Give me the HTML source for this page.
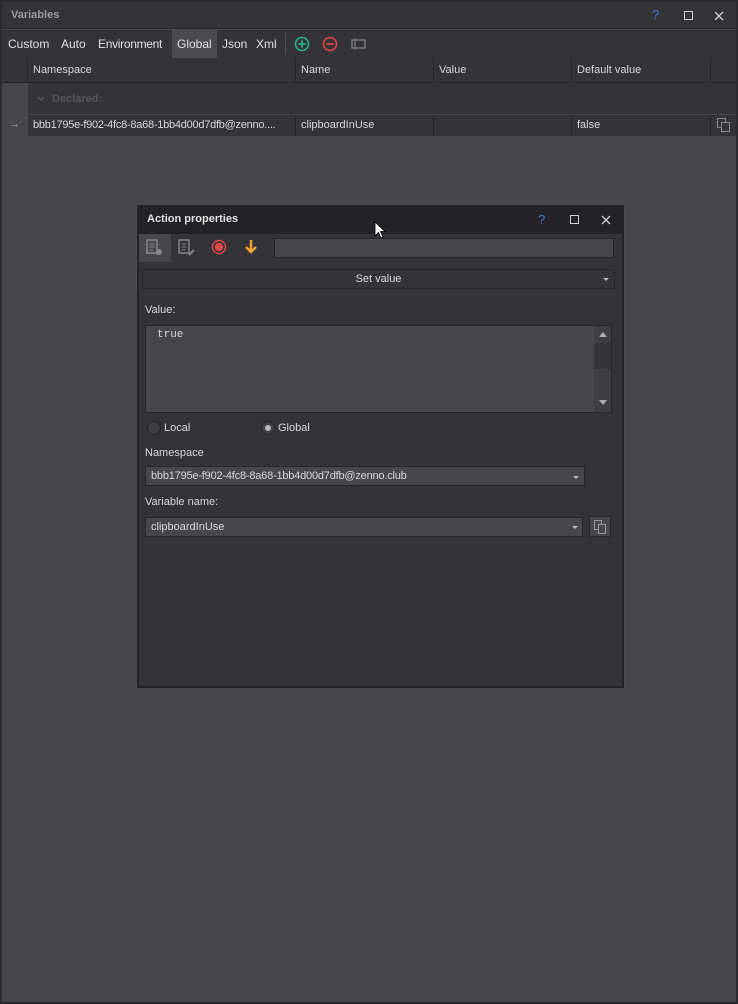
<!DOCTYPE html>
<html><head><style>
*{box-sizing:border-box;margin:0;padding:0}
body{width:738px;height:1004px;background:#2b2b2f;font-family:"Liberation Sans",sans-serif;font-size:11px;color:#d8d8d8;position:relative;overflow:hidden}
.a{position:absolute;white-space:nowrap}
.t{top:37px;font-size:12px;color:#e0e0e0}
</style></head><body>
<div class="a" style="left:0;top:0;width:738px;height:1004px;background:#47464b;border:2px solid #2b2b2f"></div>
<div class="a" style="left:2px;top:2px;width:734px;height:27px;background:#333338;border-bottom:1px solid #2a2a2e"></div>
<div class="a" style="left:11px;top:9px;font-weight:bold;color:#9a9a9e;font-size:11px">Variables</div>
<div class="a" style="left:652px;top:7px;color:#4c7ad8;font-size:13px">?</div>
<div class="a" style="left:684px;top:11px;width:9px;height:9px;border:1px solid #cfcfcf"></div>
<svg class="a" style="left:714px;top:11px" width="10" height="10"><path d="M1 1L9 9M9 1L1 9" stroke="#cfcfcf" stroke-width="1.3"/></svg>
<div class="a" style="left:2px;top:30px;width:734px;height:28px;background:#333338"></div>
<div class="a" style="left:172px;top:30px;width:45px;height:28px;background:#4a4a4f"></div>
<div class="a t" style="left:8px">Custom</div>
<div class="a t" style="left:61px">Auto</div>
<div class="a t" style="left:98px;letter-spacing:-0.3px">Environment</div>
<div class="a t" style="left:177px">Global</div>
<div class="a t" style="left:222px">Json</div>
<div class="a t" style="left:256px">Xml</div>
<div class="a" style="left:285px;top:33px;width:1px;height:21px;background:#4a4a4f"></div>
<svg class="a" style="left:294px;top:36px" width="16" height="16"><circle cx="8" cy="8" r="6.5" fill="none" stroke="#2bb38a" stroke-width="1.6"/><path d="M8 4.5V11.5M4.5 8H11.5" stroke="#2bb38a" stroke-width="1.8"/></svg>
<svg class="a" style="left:322px;top:36px" width="16" height="16"><circle cx="8" cy="8" r="6.5" fill="none" stroke="#e0474a" stroke-width="1.6"/><path d="M4.5 8H11.5" stroke="#e0474a" stroke-width="1.8"/></svg>
<svg class="a" style="left:350px;top:37px" width="17" height="14"><rect x="2" y="3" width="13" height="8" fill="none" stroke="#777" stroke-width="1.5"/><path d="M5 1V13" stroke="#777" stroke-width="1.5"/></svg>
<div class="a" style="left:2px;top:58px;width:734px;height:25px;background:#333338;border-bottom:1px solid #27272b"></div>
<div class="a" style="left:27px;top:58px;width:1px;height:24px;background:#27272b"></div>
<div class="a" style="left:295px;top:58px;width:1px;height:24px;background:#27272b"></div>
<div class="a" style="left:433px;top:58px;width:1px;height:24px;background:#27272b"></div>
<div class="a" style="left:571px;top:58px;width:1px;height:24px;background:#27272b"></div>
<div class="a" style="left:710px;top:58px;width:1px;height:24px;background:#27272b"></div>
<div class="a" style="left:33px;top:64px">Namespace</div>
<div class="a" style="left:301px;top:64px">Name</div>
<div class="a" style="left:439px;top:64px">Value</div>
<div class="a" style="left:577px;top:64px">Default value</div>
<div class="a" style="left:2px;top:83px;width:26px;height:53px;background:#47464b"></div>
<div class="a" style="left:28px;top:83px;width:708px;height:31px;background:#333338"></div>
<svg class="a" style="left:37px;top:96px" width="8" height="6"><path d="M1 1L4 4L7 1" fill="none" stroke="#555559" stroke-width="1.5"/></svg>
<div class="a" style="left:52px;top:93px;font-weight:bold;color:#555559">Declared:</div>
<div class="a" style="left:28px;top:115px;width:708px;height:21px;background:#333338"></div>
<div class="a" style="left:295px;top:115px;width:1px;height:21px;background:#27272b"></div>
<div class="a" style="left:433px;top:115px;width:1px;height:21px;background:#27272b"></div>
<div class="a" style="left:571px;top:115px;width:1px;height:21px;background:#27272b"></div>
<div class="a" style="left:710px;top:115px;width:1px;height:21px;background:#27272b"></div>
<div class="a" style="left:9px;top:118px;color:#aaa">→</div>
<div class="a" style="left:33px;top:119px;letter-spacing:-0.25px">bbb1795e-f902-4fc8-8a68-1bb4d00d7dfb@zenno....</div>
<div class="a" style="left:301px;top:119px">clipboardInUse</div>
<div class="a" style="left:577px;top:119px">false</div>
<div class="a" style="left:717px;top:118px;width:9px;height:10px;border:1px solid #888"></div>
<div class="a" style="left:721px;top:122px;width:9px;height:10px;border:1px solid #888;background:#333338"></div>

<div class="a" style="left:137px;top:205px;width:487px;height:483px;background:#333338;border:2px solid #232327;outline:1px solid #4a4a50"></div>
<div class="a" style="left:139px;top:207px;width:483px;height:27px;background:#232327"></div>
<div class="a" style="left:147px;top:213px;font-weight:bold;color:#e0e0e0">Action properties</div>
<div class="a" style="left:538px;top:212px;color:#4c7ad8;font-size:13px">?</div>
<div class="a" style="left:570px;top:215px;width:9px;height:9px;border:1px solid #cfcfcf"></div>
<svg class="a" style="left:601px;top:215px" width="10" height="10"><path d="M1 1L9 9M9 1L1 9" stroke="#cfcfcf" stroke-width="1.3"/></svg>
<svg class="a" style="left:374px;top:221px" width="12" height="19"><path d="M1 1V15L4.5 11.5L7 17L9 16L6.5 10.5H11Z" fill="#fff" stroke="#000" stroke-width="0.8"/></svg>
<div class="a" style="left:139px;top:234px;width:32px;height:28px;background:#47464b"></div>
<svg class="a" style="left:146px;top:239px" width="18" height="18"><rect x="1" y="1" width="10" height="13" fill="none" stroke="#888" stroke-width="1.5"/><path d="M3.5 5H8.5M3.5 8H8.5M3.5 11H7" stroke="#888"/><circle cx="13" cy="13" r="3" fill="#888"/></svg>
<svg class="a" style="left:178px;top:239px" width="18" height="18"><rect x="1" y="1" width="10" height="13" fill="none" stroke="#888" stroke-width="1.5"/><path d="M3.5 5H8.5M3.5 8H8.5M3.5 11H7" stroke="#888"/><path d="M11 16L16 11" stroke="#888" stroke-width="2"/></svg>
<svg class="a" style="left:211px;top:239px" width="16" height="16"><circle cx="8" cy="8" r="6.5" fill="none" stroke="#e0474a" stroke-width="1.5"/><circle cx="8" cy="8" r="4.2" fill="#e0474a"/></svg>
<svg class="a" style="left:243px;top:239px" width="16" height="16"><path d="M8 1V13M3 8L8 13L13 8" fill="none" stroke="#f0a22e" stroke-width="2.5"/></svg>
<div class="a" style="left:274px;top:238px;width:340px;height:20px;background:#47464b;border:1px solid #27272b"></div>
<div class="a" style="left:142px;top:269px;width:473px;height:20px;background:#333338;border:1px solid #27272b;text-align:center;line-height:18px">Set value</div>
<div class="a" style="left:603px;top:278px;border-left:3px solid transparent;border-right:3px solid transparent;border-top:3px solid #bbb"></div>
<div class="a" style="left:145px;top:304px">Value:</div>
<div class="a" style="left:145px;top:325px;width:467px;height:88px;background:#47464b;border:1px solid #27272b"></div>
<div class="a" style="left:157px;top:329px;font-family:'Liberation Mono',monospace;font-size:11px">true</div>
<div class="a" style="left:594px;top:326px;width:17px;height:86px;background:#3d3d42"></div>
<div class="a" style="left:594px;top:343px;width:17px;height:26px;background:#333338"></div>
<div class="a" style="left:599px;top:332px;border-left:4px solid transparent;border-right:4px solid transparent;border-bottom:5px solid #aaa"></div>
<div class="a" style="left:599px;top:400px;border-left:4px solid transparent;border-right:4px solid transparent;border-top:5px solid #aaa"></div>
<div class="a" style="left:147px;top:421px;width:14px;height:14px;border-radius:50%;background:#3d3d42;border:1px solid #27272b"></div>
<div class="a" style="left:164px;top:422px">Local</div>
<div class="a" style="left:261px;top:421px;width:14px;height:14px;border-radius:50%;background:#3d3d42;border:1px solid #27272b"><div class="a" style="left:3px;top:3px;width:6px;height:6px;border-radius:50%;background:#bbb"></div></div>
<div class="a" style="left:278px;top:422px">Global</div>
<div class="a" style="left:145px;top:447px">Namespace</div>
<div class="a" style="left:145px;top:466px;width:440px;height:20px;background:#47464b;border:1px solid #27272b;padding-left:5px;line-height:18px;letter-spacing:-0.2px">bbb1795e-f902-4fc8-8a68-1bb4d00d7dfb@zenno.club</div>
<div class="a" style="left:573px;top:476px;border-left:3px solid transparent;border-right:3px solid transparent;border-top:3px solid #bbb"></div>
<div class="a" style="left:145px;top:496px">Variable name:</div>
<div class="a" style="left:145px;top:517px;width:438px;height:20px;background:#47464b;border:1px solid #27272b;padding-left:5px;line-height:18px">clipboardInUse</div>
<div class="a" style="left:572px;top:526px;border-left:3px solid transparent;border-right:3px solid transparent;border-top:3px solid #bbb"></div>
<div class="a" style="left:589px;top:516px;width:22px;height:21px;background:#47464b;border:1px solid #27272b"></div>
<div class="a" style="left:594px;top:520px;width:8px;height:10px;border:1px solid #999"></div>
<div class="a" style="left:598px;top:524px;width:8px;height:10px;border:1px solid #999;background:#47464b"></div>
</body></html>
